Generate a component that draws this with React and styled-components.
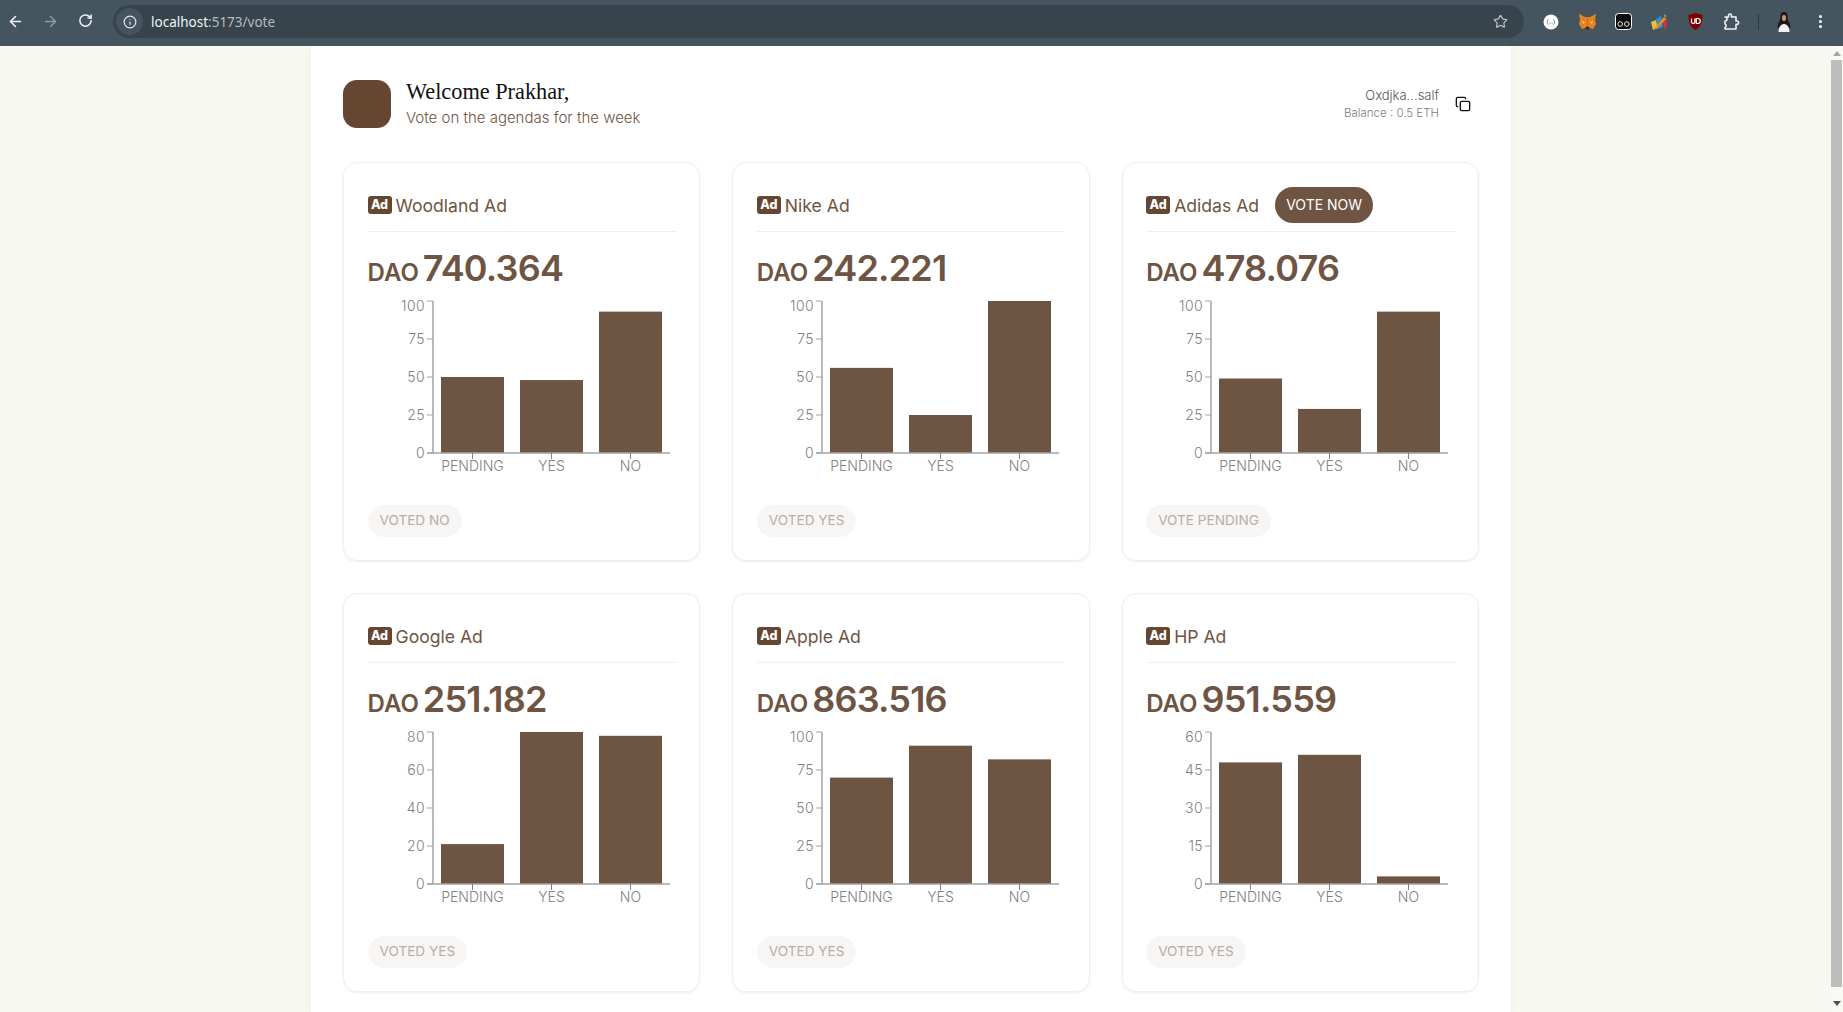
import React from 'react';
import styled, { createGlobalStyle } from 'styled-components';
import { ArrowLeft, ArrowRight, RotateCw, Info, Star, Copy, EllipsisVertical } from 'lucide-react';

const GlobalStyle = createGlobalStyle`
  html, body { margin: 0; padding: 0; height: 100%; overflow: hidden; }
  body { background: #f8f8f2; font-family: Inter, "Liberation Sans", sans-serif; }
`;

const BROWN = '#6e5443';

const Page = styled.div`
  height: 1012px;
  display: flex;
  flex-direction: column;
  overflow: hidden;
`;
const Chrome = styled.div`
  height: 46px;
  flex: none;
  background: #44555f;
  display: flex;
  align-items: center;
  padding: 0 0 3px 0;
  box-sizing: border-box;
  color: #fff;
`;
const NavBtn = styled.div`
  width: 35px;
  display: flex;
  justify-content: center;
  color: ${p => (p.$dim ? '#8d9aa1' : '#f1f3f4')};
`;
const NavGroup = styled.div`
  display: flex;
  margin-left: -2px;
  width: 115px;
  flex: none;
`;
const UrlPill = styled.div`
  width: 1411px;
  height: 33px;
  border-radius: 17px;
  background: #37444c;
  display: flex;
  align-items: center;
  padding: 0 16px 0 3px;
  box-sizing: border-box;
`;
const InfoDot = styled.div`
  width: 27px;
  height: 27px;
  border-radius: 50%;
  background: #44555f;
  display: flex;
  align-items: center;
  justify-content: center;
  margin-right: 8px;
  color: #e8eaed;
`;
const Url = styled.span`
  font-family: "Noto Sans", sans-serif;
  font-size: 13.5px;
  color: #f1f3f4;
`;
const UrlDim = styled.span`
  color: #b4bcc1;
`;
const Spacer = styled.div`
  flex: 1;
`;
const Extensions = styled.div`
  display: flex;
  align-items: center;
  margin-left: 9px;
`;
const ExtSlot = styled.div`
  width: 36px;
  display: flex;
  justify-content: center;
  align-items: center;
`;
const ToolDivider = styled.div`
  width: 1px;
  height: 16px;
  background: #2e3a41;
  margin: 0 7px 0 9px;
`;

const Body = styled.div`
  flex: 1;
  display: flex;
  min-height: 0;
`;
const Scroller = styled.div`
  flex: 1;
  display: flex;
  justify-content: center;
  min-width: 0;
`;
const ScrollTrack = styled.div`
  width: 13px;
  flex: none;
  background: #f9f9f4;
  display: flex;
  flex-direction: column;
  align-items: center;
  box-sizing: border-box;
`;
const ScrollArrow = styled.div`
  width: 0;
  height: 0;
  margin: ${p => (p.$down ? '14px 0 6px' : '5px 0 4px')};
  border-left: 4px solid transparent;
  border-right: 4px solid transparent;
  ${p => (p.$down ? 'border-top: 5px solid #505050;' : 'border-bottom: 5px solid #a5a5a5;')}
`;
const ScrollThumb = styled.div`
  width: 11px;
  flex: 1;
  background: #bebebe;
`;
const Panel = styled.main`
  width: 1200px;
  background: #fff;
  padding: 33px 32px 0;
  box-sizing: border-box;
  box-shadow: 0 0 8px rgba(120, 110, 90, 0.08);
  margin-right: 8px;
`;
const TopRow = styled.header`
  display: flex;
  align-items: center;
  justify-content: space-between;
  margin-bottom: 33px;
`;
const UserBlock = styled.div`
  display: flex;
  align-items: center;
  gap: 15px;
`;
const Avatar = styled.div`
  width: 48px;
  height: 48px;
  border-radius: 14px;
  background: #654630;
`;
const Welcome = styled.h1`
  margin: 0;
  font-family: "Liberation Serif", serif;
  font-weight: 400;
  font-size: 22.3px;
  line-height: 26px;
  color: #111;
`;
const Subtitle = styled.p`
  margin: 2px 0 0;
  font-size: 15px;
  font-weight: 300;
  line-height: 22px;
  color: ${BROWN};
`;
const WalletBlock = styled.div`
  display: flex;
  align-items: center;
  gap: 16px;
  margin-right: 8px;
`;
const WalletText = styled.div`
  text-align: right;
`;
const WalletAddr = styled.div`
  font-size: 13px;
  font-weight: 300;
  line-height: 17px;
  color: #555;
`;
const WalletBalance = styled.div`
  font-size: 11.5px;
  font-weight: 300;
  line-height: 18px;
  color: #7c7c7c;
`;
const Grid = styled.div`
  display: grid;
  grid-template-columns: repeat(3, 1fr);
  gap: 32px;
`;
const Card = styled.section`
  height: 399px;
  box-sizing: border-box;
  border: 1.5px solid #f1f0e7;
  border-radius: 14px;
  padding: 23.5px;
  box-shadow: 0 1px 2px rgba(120, 110, 90, 0.12);
  display: flex;
  flex-direction: column;
`;
const CardHead = styled.div`
  height: 45px;
  flex: none;
  box-sizing: border-box;
  padding-bottom: 8px;
  border-bottom: 1px solid #f0efe8;
  display: flex;
  align-items: center;
  color: ${BROWN};
`;
const AdBadge = styled.span`
  width: 24px;
  height: 18px;
  border-radius: 3px;
  background: #654630;
  color: #fff;
  font-size: 12.5px;
  font-weight: 800;
  line-height: 18px;
  text-align: center;
  margin-right: 4px;
`;
const CardName = styled.span`
  font-size: 17.6px;
  font-weight: 400;
  padding-top: 1px;
`;
const VoteNow = styled.button`
  height: 36px;
  width: 98px;
  margin-left: 16px;
  border: 0;
  border-radius: 18px;
  background: ${BROWN};
  color: #fff;
  font-family: inherit;
  font-size: 14px;
  padding: 0;
`;
const Amount = styled.div`
  display: flex;
  align-items: baseline;
  gap: 4px;
  margin-top: 14px;
  margin-bottom: 1px;
  height: 48px;
  color: ${BROWN};
  font-weight: 600;
`;
const Dao = styled.span`
  font-size: 24px;
`;
const Value = styled.span`
  font-size: 36px;
  letter-spacing: -0.8px;
`;
const ChartSvg = styled.svg`
  display: block;
  flex: none;
  overflow: visible;
  font-family: Inter, sans-serif;
  font-weight: 300;
`;
const Status = styled.span`
  align-self: flex-start;
  margin-top: auto;
  height: 32px;
  line-height: 31px;
  padding: 0 12px;
  border-radius: 16px;
  background: #f8f6f4;
  color: #b5aeaa;
  font-size: 13.6px;
  font-weight: 400;
`;

// chart geometry inside the 307px wide card body
const AXIS_X = 65;
const TOP = 6;
const BOTTOM = 158;
const BARS = [73, 152, 231];
const BAR_W = 63;

const BarChart = ({ max, ticks, values }) => {
  const y = v => BOTTOM - (v / max) * (BOTTOM - TOP);
  return (
    <ChartSvg width="307" height="180" viewBox="0 0 307 180">
      {values.map((v, i) => (
        <rect key={i} x={BARS[i]} y={y(v)} width={BAR_W} height={BOTTOM - y(v)} fill={BROWN} />
      ))}
      <path d={`M${AXIS_X} ${TOP}V${BOTTOM}`} stroke="#a3a3a3" strokeWidth="1.5" fill="none" />
      <path d={`M${AXIS_X - 6} ${BOTTOM}H302`} stroke="#a3a3a3" strokeWidth="1.5" fill="none" />
      {ticks.map((t, i) => (
        <g key={t}>
          <line x1={AXIS_X - 6} x2={AXIS_X} y1={y(t)} y2={y(t)} stroke="#a3a3a3" />
          <text
            x={AXIS_X - 8}
            y={y(t) + (i === ticks.length - 1 ? 10 : 5)}
            textAnchor="end"
            fontSize="14"
            letterSpacing="0.4"
            fill="#808080"
          >
            {t}
          </text>
        </g>
      ))}
      {['PENDING', 'YES', 'NO'].map((label, i) => (
        <g key={label}>
          <line
            x1={BARS[i] + BAR_W / 2}
            x2={BARS[i] + BAR_W / 2}
            y1={BOTTOM}
            y2={BOTTOM + 6}
            stroke="#808080"
          />
          <text x={BARS[i] + BAR_W / 2} y={BOTTOM + 18} textAnchor="middle" fontSize="14" fill="#808080">
            {label}
          </text>
        </g>
      ))}
    </ChartSvg>
  );
};

const cards = [
  { name: 'Woodland Ad', value: '740.364', max: 100, ticks: [0, 25, 50, 75, 100], values: [50, 48, 93], status: 'VOTED NO' },
  { name: 'Nike Ad', value: '242.221', max: 100, ticks: [0, 25, 50, 75, 100], values: [56, 25, 100], status: 'VOTED YES' },
  { name: 'Adidas Ad', value: '478.076', max: 100, ticks: [0, 25, 50, 75, 100], values: [49, 29, 93], status: 'VOTE PENDING', vote: true },
  { name: 'Google Ad', value: '251.182', max: 80, ticks: [0, 20, 40, 60, 80], values: [21, 80, 78], status: 'VOTED YES' },
  { name: 'Apple Ad', value: '863.516', max: 100, ticks: [0, 25, 50, 75, 100], values: [70, 91, 82], status: 'VOTED YES' },
  { name: 'HP Ad', value: '951.559', max: 60, ticks: [0, 15, 30, 45, 60], values: [48, 51, 3], status: 'VOTED YES' },
];

const FaceExt = () => (
  <svg width="16" height="16" viewBox="0 0 16 16">
    <circle cx="8" cy="8" r="7.500" fill="#fff" />
    <path d="M5.500 5.500c-1 .5-1 1.500-1 2.500s0 2 1 2.500M10.500 5.500c1 .5 1 1.500 1 2.500s0 2-1 2.500" stroke="#666" fill="none" strokeWidth=".8" />
    <circle cx="7" cy="9" r=".5" fill="#555" />
    <circle cx="9" cy="9" r=".5" fill="#555" />
  </svg>
);
const FoxExt = () => (
  <svg width="17" height="16" viewBox="0 0 17 16">
    <path d="M0 0l6 3h5l6-3-1 6 1 4-3 5-3-1H6l-3 1-3-5 1-4z" fill="#e8821e" />
    <path d="M6 14l2.500-2 2.500 2-2.500 2z" fill="#3b2a20" />
    <path d="M3 7l3 1-2 2zM14 7l-3 1 2 2z" fill="#f7c9a0" />
    <path d="M8 3h1v8H8z" fill="#d2691e" />
  </svg>
);
const SpecsExt = () => (
  <svg width="17" height="17" viewBox="0 0 17 17">
    <rect x=".5" y=".5" width="16" height="16" rx="3" fill="#0c0c0c" stroke="#fff" />
    <circle cx="5.200" cy="11" r="2.300" fill="none" stroke="#eee" />
    <circle cx="11.800" cy="11" r="2.300" fill="none" stroke="#eee" />
  </svg>
);
const PencilExt = () => (
  <svg width="18" height="18" viewBox="0 0 18 18">
    <path d="M1 9l5-2 2 8-5 2z" fill="#e2c33a" />
    <path d="M6 6l5-3 2 11-5 2z" fill="#2b8fd0" />
    <path d="M13 7l4-3v10l-3 2z" fill="#c8324a" />
    <path d="M4 16L14 4l2 2-9 10z" fill="#f08a24" />
    <path d="M14 1l3 2-3 2z" fill="#4caf50" />
  </svg>
);
const ShieldExt = () => (
  <svg width="15" height="17" viewBox="0 0 15 17">
    <path d="M.5 2L7.500 0l7 2c0 7-1.500 12-7 15C2 14 .5 9 .5 2z" fill="#800000" />
    <path d="M3.500 5.500v3.300a1.700 1.700 0 003.400 0V5.500M8.300 5.500v5h1.500a2.500 2.500 0 000-5z" stroke="#fff" fill="none" strokeWidth="1.200" />
  </svg>
);
const PuzzleExt = () => (
  <svg width="17" height="18" viewBox="0 0 17 18">
    <path
      d="M2 4h3.500V2.500a1.500 1.500 0 013 0V4H13v4h1a1.700 1.700 0 010 3.400h-1V16H2v-1.500a2 2 0 000-3.600V8a2 2 0 000-4z"
      fill="none"
      stroke="#f1f3f4"
      strokeWidth="1.600"
      strokeLinejoin="round"
    />
  </svg>
);
const ProfilePic = () => (
  <svg width="14" height="20" viewBox="0 0 14 20">
    <path d="M7 0c3 0 3.500 2 3.500 5 0 4 3 6 3 11H.5C.5 11 3.500 9 3.500 5c0-3 .5-5 3.500-5z" fill="#1f1816" />
    <ellipse cx="7" cy="6" rx="2" ry="3" fill="#c99a80" />
    <path d="M1.500 20c0-5 2.500-8 5.500-8s5.500 3 5.500 8z" fill="#f2f2f2" />
  </svg>
);

const App = () => (
  <Page>
    <GlobalStyle />
    <Chrome>
      <NavGroup>
        <NavBtn><ArrowLeft size={17} strokeWidth={2.2} /></NavBtn>
        <NavBtn $dim><ArrowRight size={17} strokeWidth={2.2} /></NavBtn>
        <NavBtn><RotateCw size={15} strokeWidth={2.4} /></NavBtn>
      </NavGroup>
      <UrlPill>
        <InfoDot><Info size={14} strokeWidth={2} /></InfoDot>
        <Url>localhost<UrlDim>:5173/vote</UrlDim></Url>
        <Spacer />
        <Star size={15} color="#c4cbd0" strokeWidth={1.8} />
      </UrlPill>
      <Extensions>
        <ExtSlot><FaceExt /></ExtSlot>
        <ExtSlot><FoxExt /></ExtSlot>
        <ExtSlot><SpecsExt /></ExtSlot>
        <ExtSlot><PencilExt /></ExtSlot>
        <ExtSlot><ShieldExt /></ExtSlot>
        <ExtSlot><PuzzleExt /></ExtSlot>
        <ToolDivider />
        <ExtSlot><ProfilePic /></ExtSlot>
        <ExtSlot><EllipsisVertical size={17} color="#f1f3f4" strokeWidth={2.4} /></ExtSlot>
      </Extensions>
    </Chrome>
    <Body>
      <Scroller>
        <Panel>
          <TopRow>
            <UserBlock>
              <Avatar />
              <div>
                <Welcome>Welcome Prakhar,</Welcome>
                <Subtitle>Vote on the agendas for the week</Subtitle>
              </div>
            </UserBlock>
            <WalletBlock>
              <WalletText>
                <WalletAddr>Oxdjka...salf</WalletAddr>
                <WalletBalance>Balance : 0.5 ETH</WalletBalance>
              </WalletText>
              <Copy size={16} color="#111" strokeWidth={2} />
            </WalletBlock>
          </TopRow>
          <Grid>
            {cards.map(card => (
              <Card key={card.name}>
                <CardHead>
                  <AdBadge>Ad</AdBadge>
                  <CardName>{card.name}</CardName>
                  {card.vote && <VoteNow>VOTE NOW</VoteNow>}
                </CardHead>
                <Amount>
                  <Dao>DAO</Dao>
                  <Value>{card.value}</Value>
                </Amount>
                <BarChart max={card.max} ticks={card.ticks} values={card.values} />
                <Status>{card.status}</Status>
              </Card>
            ))}
          </Grid>
        </Panel>
      </Scroller>
      <ScrollTrack>
        <ScrollArrow />
        <ScrollThumb />
        <ScrollArrow $down />
      </ScrollTrack>
    </Body>
  </Page>
);

export default App;
